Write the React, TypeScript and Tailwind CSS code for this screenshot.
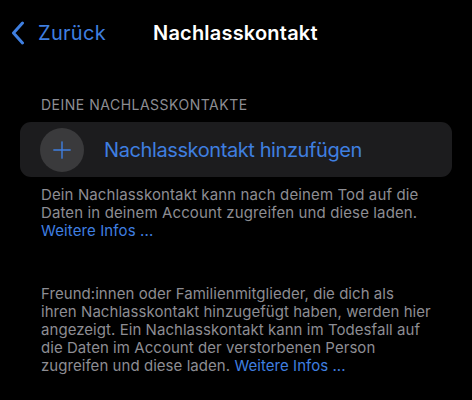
import { Plus } from "lucide-react";

const App = () => {
  return (
    <div
      className="w-[472px] h-[400px] bg-black overflow-hidden"
      style={{ fontFamily: "Inter, 'Noto Sans', sans-serif" }}
    >
      <div className="relative h-[66px] flex items-center">
        <button className="flex items-center pl-[11px] text-[#3f7fe0]">
          <svg width="14" height="24" viewBox="0 0 14 24" fill="none">
            <path
              d="M11.5 2 L2.5 12 L11.5 22"
              stroke="currentColor"
              strokeWidth="3"
              strokeLinecap="round"
              strokeLinejoin="round"
            />
          </svg>
          <span className="ml-[13px] text-[20px] tracking-[0.3px]">Zurück</span>
        </button>
        <h1 className="absolute left-[153px] text-[20px] font-semibold text-white tracking-[0.2px]">
          Nachlasskontakt
        </h1>
      </div>

      <div className="pt-[32px] px-[20px]">
        <div className="pl-[21px] text-[14px] text-[#8d8d93] uppercase leading-none tracking-[0.5px]">
          Deine Nachlasskontakte
        </div>
        <div className="mt-[10px] h-[55px] bg-[#1c1c1e] rounded-[11px] flex items-center pl-[20px]">
          <div className="w-[44px] h-[44px] rounded-full bg-[#3a3a3c] flex items-center justify-center text-[#3f7fe0]">
            <Plus size={28} strokeWidth={1.2} />
          </div>
          <span className="ml-[20px] text-[20px] text-[#3f7fe0] tracking-[-0.4px]">
            Nachlasskontakt hinzufügen
          </span>
        </div>
        <p className="mt-[9px] pl-[21px] text-[15px] leading-[18px] text-[#8d8d93] tracking-[0.12px]">
          Dein Nachlasskontakt kann nach deinem Tod auf die
          <br />
          Daten in deinem Account zugreifen und diese laden.
          <br />
          <span className="text-[#3f7fe0]">Weitere Infos ...</span>
        </p>
        <p className="mt-[45px] pl-[21px] text-[15px] leading-[18px] text-[#8d8d93] tracking-[0.05px]">
          Freund:innen oder Familienmitglieder, die dich als
          <br />
          ihren Nachlasskontakt hinzugefügt haben, werden hier
          <br />
          angezeigt. Ein Nachlasskontakt kann im Todesfall auf
          <br />
          die Daten im Account der verstorbenen Person
          <br />
          zugreifen und diese laden. <span className="text-[#3f7fe0]">Weitere Infos ...</span>
        </p>
      </div>
    </div>
  );
};

export default App;
